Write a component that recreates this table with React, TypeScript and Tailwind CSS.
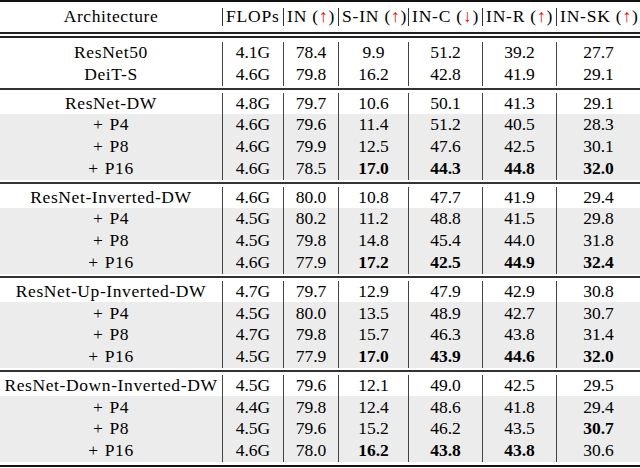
import React from "react";

type Row = string[];

const sections: Row[][] = [
  [
    ["ResNet50", "4.1G", "78.4", "9.9", "51.2", "39.2", "27.7"],
    ["DeiT-S", "4.6G", "79.8", "16.2", "42.8", "41.9", "29.1"],
  ],
  [
    ["ResNet-DW", "4.8G", "79.7", "10.6", "50.1", "41.3", "29.1"],
    ["+ P4", "4.6G", "79.6", "11.4", "51.2", "40.5", "28.3"],
    ["+ P8", "4.6G", "79.9", "12.5", "47.6", "42.5", "30.1"],
    ["+ P16", "4.6G", "78.5", "*17.0", "*44.3", "*44.8", "*32.0"],
  ],
  [
    ["ResNet-Inverted-DW", "4.6G", "80.0", "10.8", "47.7", "41.9", "29.4"],
    ["+ P4", "4.5G", "80.2", "11.2", "48.8", "41.5", "29.8"],
    ["+ P8", "4.5G", "79.8", "14.8", "45.4", "44.0", "31.8"],
    ["+ P16", "4.6G", "77.9", "*17.2", "*42.5", "*44.9", "*32.4"],
  ],
  [
    ["ResNet-Up-Inverted-DW", "4.7G", "79.7", "12.9", "47.9", "42.9", "30.8"],
    ["+ P4", "4.5G", "80.0", "13.5", "48.9", "42.7", "30.7"],
    ["+ P8", "4.7G", "79.8", "15.7", "46.3", "43.8", "31.4"],
    ["+ P16", "4.5G", "77.9", "*17.0", "*43.9", "*44.6", "*32.0"],
  ],
  [
    ["ResNet-Down-Inverted-DW", "4.5G", "79.6", "12.1", "49.0", "42.5", "29.5"],
    ["+ P4", "4.4G", "79.8", "12.4", "48.6", "41.8", "29.4"],
    ["+ P8", "4.5G", "79.6", "15.2", "46.2", "43.5", "*30.7"],
    ["+ P16", "4.6G", "78.0", "*16.2", "*43.8", "*43.8", "30.6"],
  ],
];

const grid = "grid grid-cols-[222px_61px_55px_70px_74px_74px_84px]";

function Sep() {
  return (
    <div className="py-[2.5px]">
      <div className="h-[2px] bg-[#333]" />
    </div>
  );
}

function Cell({ v, first }: { v: string; first: boolean }) {
  const bold = v.startsWith("*");
  const text = bold ? v.slice(1) : v;
  if (first) {
    if (text.startsWith("+ ")) {
      return (
        <div className="flex items-center justify-center tracking-[0.6px] whitespace-nowrap">
          <span className="mr-[6px]">+</span>
          {text.slice(2)}
        </div>
      );
    }
    return (
      <div className="flex items-center justify-center tracking-[0.6px] whitespace-nowrap">
        {text}
      </div>
    );
  }
  return (
    <div
      className={`flex items-center justify-center border-l border-[#444] whitespace-nowrap ${
        bold ? "font-bold" : ""
      }`}
    >
      {text}
    </div>
  );
}

function Head({ name, arrow }: { name: string; arrow?: string }) {
  return (
    <div className="flex items-center">
      <div className="h-[18px] border-l border-[#333]" />
      <div className="pl-[3px] whitespace-nowrap tracking-[0.8px]">
        {name}
        {arrow && (
          <>
            {" ("}
            <span className="text-[#ff0000]">{arrow}</span>
            {")"}
          </>
        )}
      </div>
    </div>
  );
}

export default function App() {
  return (
    <div className="font-serif">
      <div className="w-[640px] h-[468px] overflow-hidden bg-white text-black font-['Liberation_Serif'] text-[17.5px] leading-none">
        <div className="h-[2px] bg-[#111]" />
        <div className={`${grid} h-[30px]`}>
          <div className="flex items-center justify-center tracking-[0.6px]">Architecture</div>
          <Head name="FLOPs" />
          <Head name="IN" arrow="↑" />
          <Head name="S-IN" arrow="↑" />
          <Head name="IN-C" arrow="↓" />
          <Head name="IN-R" arrow="↑" />
          <Head name="IN-SK" arrow="↑" />
        </div>
        <div className="h-[2px] bg-[#222]" />
        <div className="h-[2px]" />
        <div className="h-[2px] bg-[#222]" />
        <div className="h-[4px]" />
        {sections.map((sec, si) => (
          <React.Fragment key={si}>
            {si > 0 && <Sep />}
            <div>
              {sec.map((row, ri) => (
                <div
                  key={ri}
                  className={`${grid} h-[21.78px] ${si > 0 && ri > 0 ? "bg-[#ececec]" : ""}`}
                >
                  {row.map((v, ci) => (
                    <Cell key={ci} v={v} first={ci === 0} />
                  ))}
                </div>
              ))}
            </div>
          </React.Fragment>
        ))}
        <div className="h-[3px]" />
        <div className="h-[2px] bg-[#111]" />
      </div>
    </div>
  );
}
